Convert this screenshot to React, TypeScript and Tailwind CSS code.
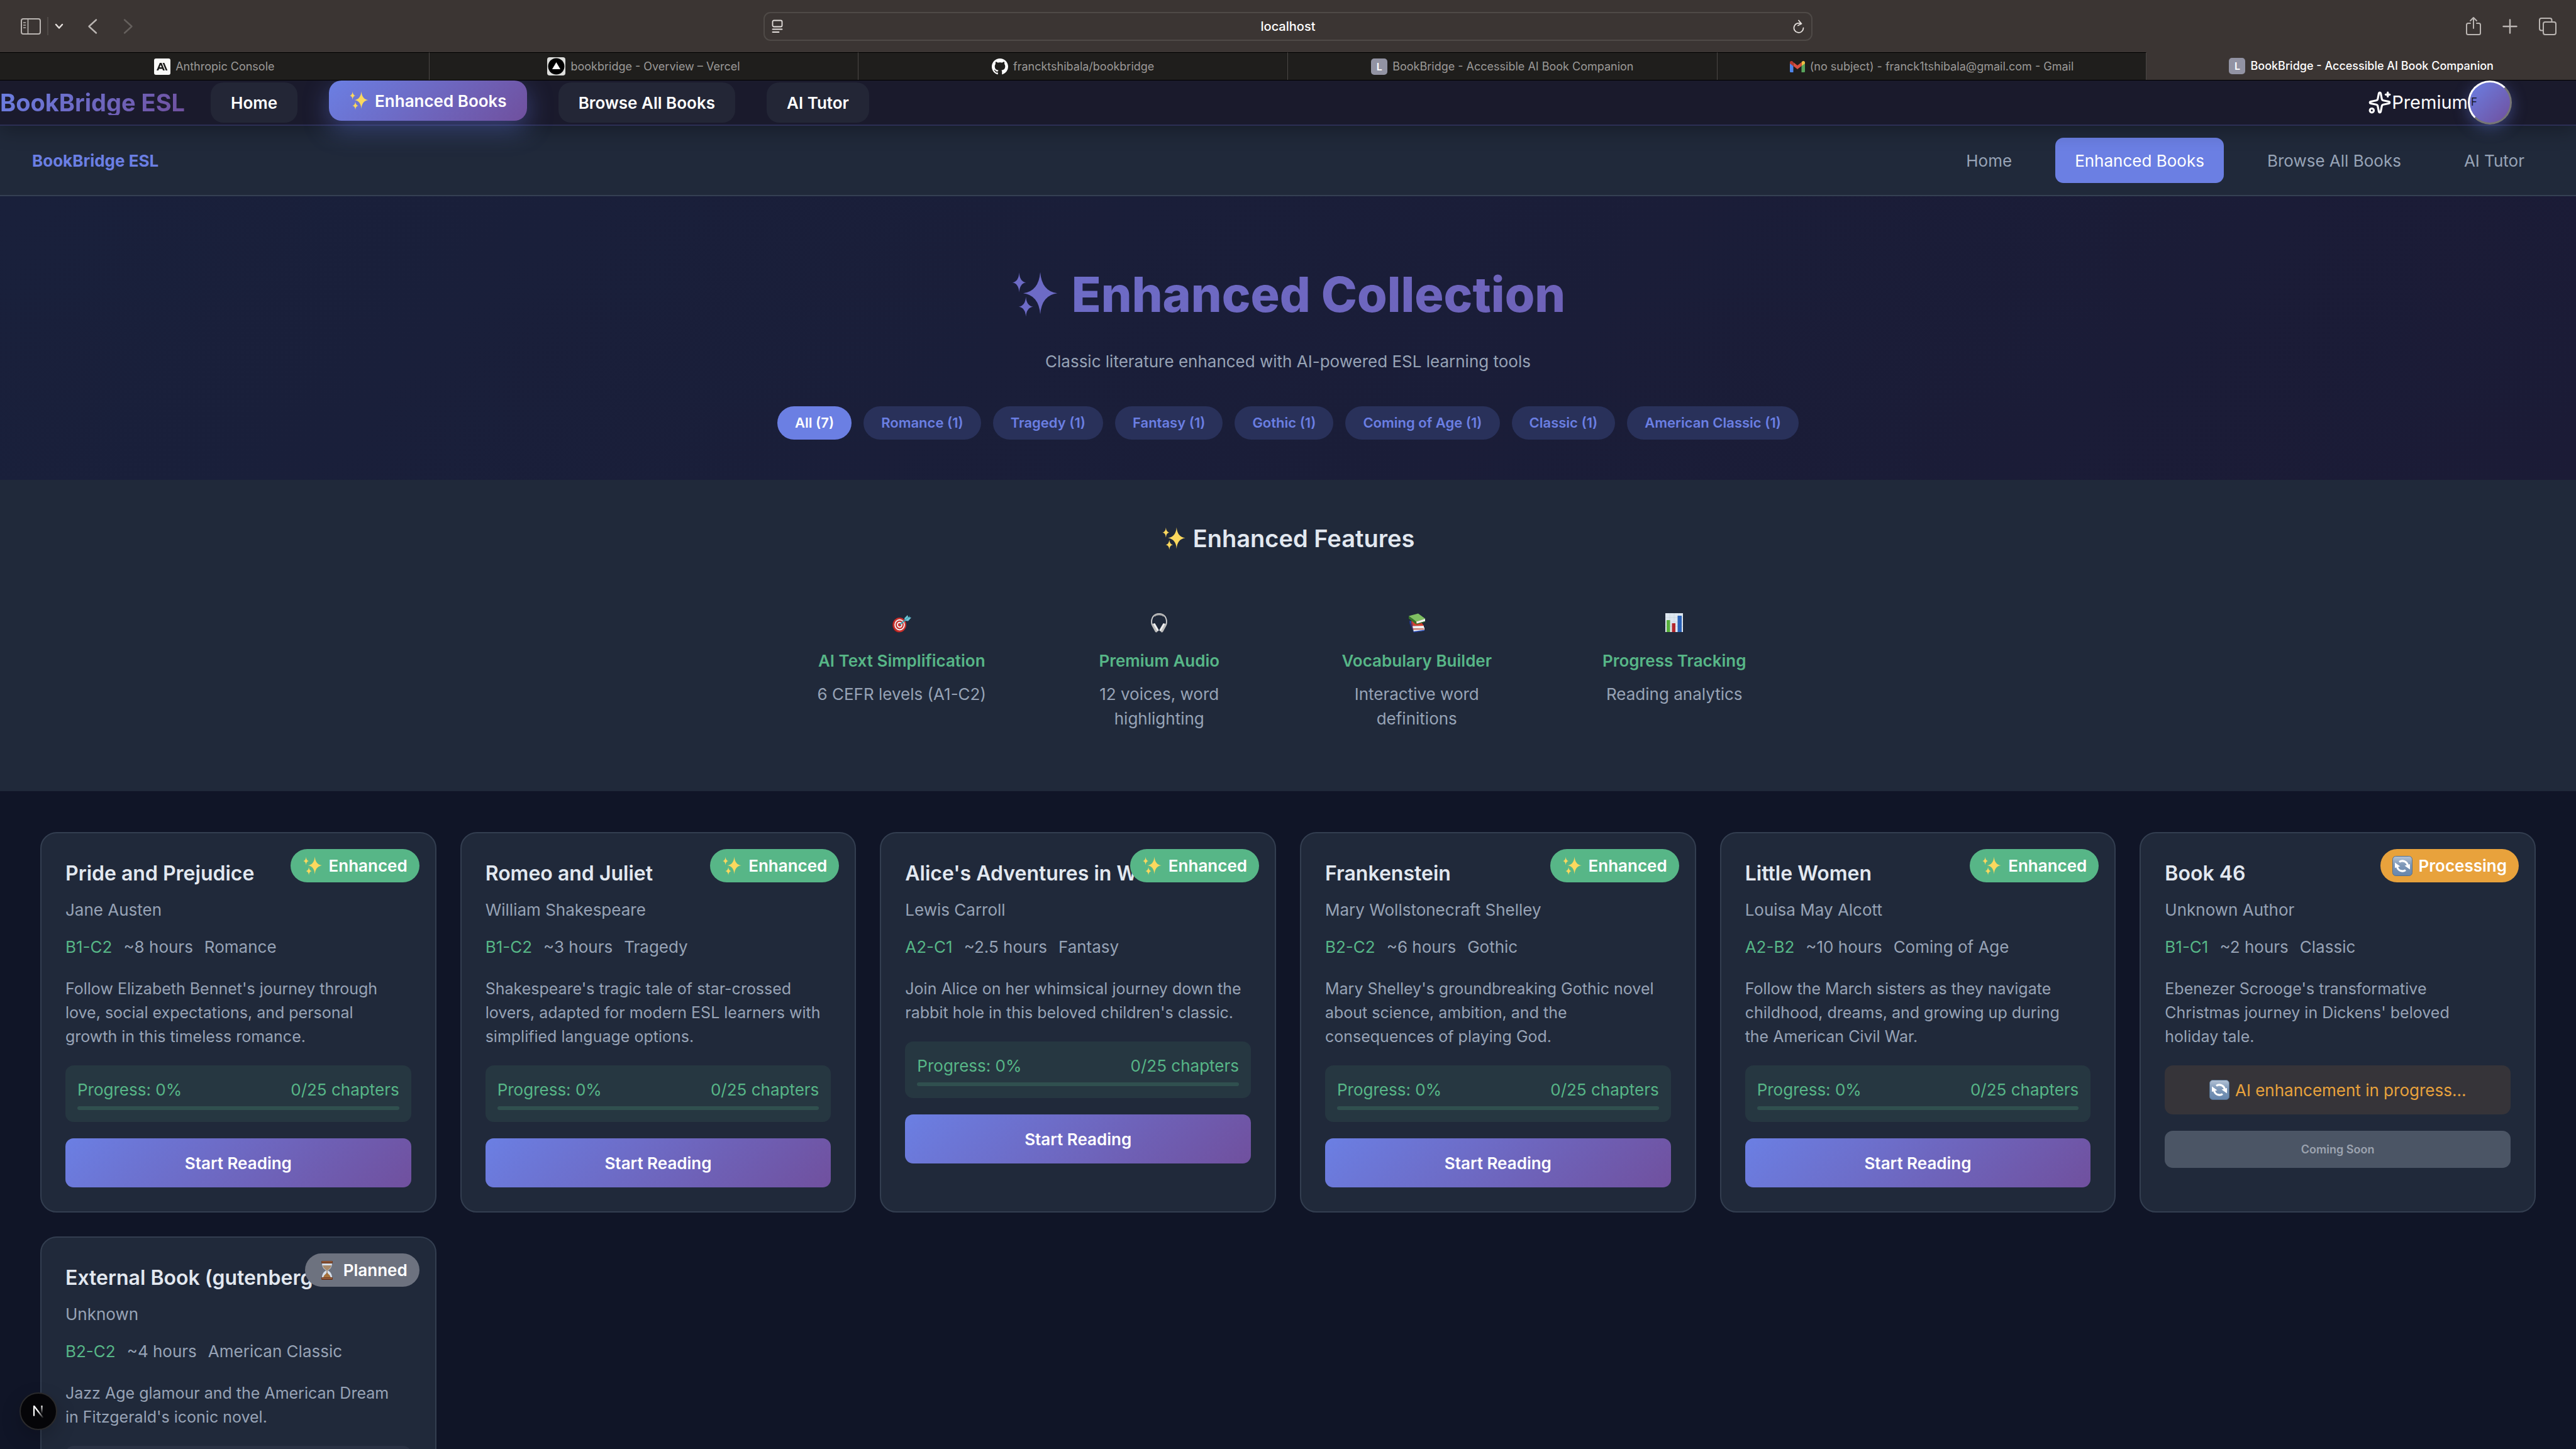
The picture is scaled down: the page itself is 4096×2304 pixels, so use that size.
import React from "react";
import { Sparkles } from "lucide-react";

/* ---------- Emoji-style drawings ---------- */

function star(cx: number, cy: number, rx: number, ry: number) {
  const k = 0.09;
  return `M${cx} ${cy - ry}Q${cx + rx * k} ${cy - ry * k} ${cx + rx} ${cy}Q${cx + rx * k} ${cy + ry * k} ${cx} ${cy + ry}Q${cx - rx * k} ${cy + ry * k} ${cx - rx} ${cy}Q${cx - rx * k} ${cy - ry * k} ${cx} ${cy - ry}Z`;
}

function SparkleEmoji({ className, fill = "#fbd85e" }: { className: string; fill?: string }) {
  return (
    <svg viewBox="-4 -4 108 108" className={className} fill={fill} aria-hidden="true">
      <path d={star(15, 23, 15, 22)} />
      <path d={star(62, 47, 38, 47)} />
      <path d={star(30, 77, 16, 22)} />
    </svg>
  );
}

function RefreshEmoji({ className }: { className: string }) {
  return (
    <svg viewBox="0 0 32 32" className={className} aria-hidden="true">
      <defs>
        <linearGradient id="refresh-tile" x1="0" y1="0" x2="0" y2="1">
          <stop offset="0" stopColor="#b4c3d6" />
          <stop offset="0.45" stopColor="#7d97b7" />
          <stop offset="1" stopColor="#6686ad" />
        </linearGradient>
      </defs>
      <rect x="0.5" y="0.5" width="31" height="31" rx="5" fill="url(#refresh-tile)" stroke="#54708f" />
      <g fill="none" stroke="#fff" strokeWidth="3.2">
        <path d="M11 9.500a8.500 8.500 0 0 1 13.300 5" />
        <path d="M21 22.500a8.500 8.500 0 0 1-13.300-5" />
      </g>
      <path d="M4 10.500v8.500l8.500-2.500zM28 21.500V13l-8.500 2.500z" fill="#fff" />
    </svg>
  );
}

function HourglassEmoji({ className }: { className: string }) {
  return (
    <svg viewBox="0 0 32 32" className={className} aria-hidden="true">
      <path d="M8 4h16c0 7-3 10-7 12 4 2 7 5 7 12H8c0-7 3-10 7-12-4-2-7-5-7-12z" fill="#d5dfeb" />
      <path d="M9 8h14c-1 4-3 6-7 8-4-2-6-4-7-8z" fill="#a88a6b" />
      <path d="M16 19c1 3 5 3 6 9H10c1-6 5-6 6-9z" fill="#a5713c" />
      <path d="M15.500 15h1v7h-1z" fill="#8a6238" />
      <rect x="7" y="1" width="18" height="4" rx="1" fill="#6b3a22" />
      <rect x="7" y="27" width="18" height="4" rx="1" fill="#6b3a22" />
      <rect x="8" y="2" width="16" height="1" fill="#b0724a" />
      <rect x="8" y="28" width="16" height="1" fill="#b0724a" />
    </svg>
  );
}

function TargetEmoji() {
  return (
    <svg viewBox="0 0 32 32" className="size-8" aria-hidden="true">
      <ellipse cx="11.500" cy="20" rx="10.500" ry="11.500" fill="#8f1d1b" />
      <ellipse cx="12.500" cy="19.500" rx="10.500" ry="11.500" fill="#c9302c" />
      <ellipse cx="12.500" cy="19.500" rx="8.300" ry="9" fill="#f3f3f3" />
      <ellipse cx="12.500" cy="19.500" rx="6.500" ry="7" fill="#c9302c" />
      <ellipse cx="12.500" cy="19.500" rx="4.400" ry="4.800" fill="#f3f3f3" />
      <ellipse cx="12.500" cy="19.500" rx="2.500" ry="2.700" fill="#c9302c" />
      <path d="M13 19 23 10.500" stroke="#3c9fb0" strokeWidth="2.200" />
      <path d="M20 9 25 4l1 3 5 1-5 5.500-5-.500z" fill="#6cc4d4" />
      <path d="m20 13 9-7.500" stroke="#2d8796" strokeWidth="1" />
    </svg>
  );
}

function HeadphonesEmoji() {
  return (
    <svg viewBox="0 0 32 32" className="size-8" aria-hidden="true">
      <path d="M4.500 19C2.500 8 8 2 16 2s13.500 6 11.500 17" fill="none" stroke="#cfcfcf" strokeWidth="1.800" />
      <path d="M8 5.500C12 2 20 2 24 5.500" fill="none" stroke="#b0b0b0" strokeWidth="2.800" />
      <g strokeLinecap="round">
        <path d="M6 19.500 11.500 29.500" stroke="#bdbdbd" strokeWidth="4" />
        <path d="M8.500 18.500 14 28" stroke="#f0f0f0" strokeWidth="3" />
        <path d="M26 19.500 20.500 29.500" stroke="#bdbdbd" strokeWidth="4" />
        <path d="M23.500 18.500 18 28" stroke="#f0f0f0" strokeWidth="3" />
      </g>
    </svg>
  );
}

function BooksEmoji() {
  return (
    <svg viewBox="0 0 32 32" className="size-8" aria-hidden="true">
      <path d="M4 13 21 18l7 6-18 3z" fill="#2c4bb5" />
      <path d="M4 13v4l6 13v-4z" fill="#1e3480" />
      <path d="m10 26.500 18-3v5l-17 2.500z" fill="#e9e9ee" />
      <path d="m10 30 18-2.500v1.500L11 31.500z" fill="#2c4bb5" />
      <path d="m7 12 15 2 5 7-17 .500z" fill="#d2402f" />
      <path d="M7 12v6l2 8v-5z" fill="#97261c" />
      <path d="m9 21.500 18-.500v4.500l-17 .500z" fill="#f2f0ee" />
      <path d="M9 25.500h18v1.300H9z" fill="#b5301f" />
      <path d="M3 5.500 18 1.500 29.500 10 15 14.500z" fill="#7fbf62" />
      <path d="M3 5.500v4L15 19v-4.500z" fill="#37752a" />
      <path d="M15 14.500 29 10v4l-13 4z" fill="#f4f4f0" />
      <path d="m15 17.800 14-4v1.200L15.500 19z" fill="#2f6b24" />
    </svg>
  );
}

function ChartEmoji() {
  return (
    <svg viewBox="0 0 32 32" className="size-8" aria-hidden="true">
      <path d="M2 1h28v30H2z" fill="#dfe8f0" />
      <path d="M2 8h28M2 15h28M2 22h28M9 1v30M16 1v30M23 1v30" stroke="#c3d2df" strokeWidth="0.600" />
      <path d="M4 12h5.500v19H4z" fill="#58b03c" />
      <path d="M12.500 17h5.500v14h-5.500z" fill="#b3282d" />
      <path d="M21.500 5H28v26h-6.500z" fill="#2a62b8" />
    </svg>
  );
}

/* ---------- Browser chrome ---------- */

const line = { fill: "none", stroke: "currentColor", strokeLinecap: "round", strokeLinejoin: "round" } as const;

function LetterFavicon() {
  return (
    <span className="flex size-[26px] items-center justify-center rounded-[5px] bg-[#9293a3] text-[16px] font-semibold leading-none text-white">
      L
    </span>
  );
}

function AnthropicFavicon() {
  return (
    <svg viewBox="0 0 26 26" className="size-[26px]" aria-hidden="true">
      <rect width="26" height="26" rx="3" fill="#fafaf8" />
      <path
        fillRule="evenodd"
        d="M4 19 9 7h3l5 12h-2.800l-1.100-2.600H7.900L6.800 19zM8.800 14.100h3.400l-1.700-4.200zM13.600 7h2.700l5 12h-2.700z"
        fill="#1b1b1a"
      />
    </svg>
  );
}

function VercelFavicon() {
  return (
    <svg viewBox="0 0 29 29" className="size-[29px]" aria-hidden="true">
      <rect width="29" height="29" rx="4" fill="#dcdddb" />
      <circle cx="14.500" cy="14.500" r="13" fill="#000" />
      <path d="m14.500 8 6.500 11H8z" fill="#fff" />
    </svg>
  );
}

function GithubFavicon() {
  return (
    <svg viewBox="0 0 16 16" className="size-[26px]" fill="#fff" aria-hidden="true">
      <path d="M8 0C3.580 0 0 3.580 0 8c0 3.540 2.290 6.530 5.470 7.590.4.070.55-.17.55-.38 0-.19-.01-.82-.01-1.490-2.010.37-2.530-.49-2.690-.94-.09-.23-.48-.94-.82-1.130-.28-.15-.68-.52-.01-.53.63-.01 1.080.58 1.230.82.72 1.210 1.870.87 2.330.66.07-.52.28-.87.51-1.070-1.780-.2-3.640-.89-3.640-3.950 0-.87.31-1.590.82-2.150-.08-.2-.36-1.020.08-2.120 0 0 .67-.21 2.200.82.64-.18 1.320-.27 2-.27s1.360.09 2 .27c1.530-1.040 2.200-.82 2.200-.82.44 1.100.16 1.920.08 2.120.51.56.82 1.270.82 2.150 0 3.070-1.870 3.750-3.650 3.950.29.25.54.73.54 1.480 0 1.070-.01 1.930-.01 2.200 0 .21.15.46.55.38A8.010 8.010 0 0 0 16 8c0-4.420-3.580-8-8-8z" />
    </svg>
  );
}

function GmailFavicon() {
  return (
    <svg viewBox="0 0 24 18" className="h-[18px] w-6" aria-hidden="true">
      <path d="M0 2v14.500A1.500 1.500 0 0 0 1.500 18H5.500V8z" fill="#4f86ec" />
      <path d="M24 2v14.500a1.500 1.500 0 0 1-1.500 1.500h-4V8z" fill="#58a55c" />
      <path d="M18.500 2v6L24 4V2.500C24 0 21-.8 19.500.800z" fill="#f2be42" />
      <path d="M5.500 8V2L12 7l6.500-5v6L12 13z" fill="#d95040" />
      <path d="M0 2.500V4l5.500 4V2L4.500.800C3-.8 0 0 0 2.500z" fill="#b53a2f" />
    </svg>
  );
}

const tabs = [
  { title: "Anthropic Console", icon: <AnthropicFavicon /> },
  { title: "bookbridge - Overview – Vercel", icon: <VercelFavicon /> },
  { title: "francktshibala/bookbridge", icon: <GithubFavicon /> },
  { title: "BookBridge - Accessible AI Book Companion", icon: <LetterFavicon /> },
  { title: "(no subject) - franck1tshibala@gmail.com - Gmail", icon: <GmailFavicon /> },
  { title: "BookBridge - Accessible AI Book Companion", icon: <LetterFavicon />, active: true },
];

function BrowserChrome() {
  return (
    <div className="relative z-20 shrink-0">
      <div className="grid h-[83px] grid-cols-[1fr_40.7%_1fr] items-center bg-[#3b3533] text-[#bab5b2]">
        <div className="flex items-center pl-[33px]">
          <button type="button" aria-label="Show sidebar">
            <svg viewBox="0 0 32 26" className="h-[26px] w-8" {...line} strokeWidth="2">
              <rect x="1" y="1" width="30" height="24" rx="3" />
              <path d="M11.500 1v24M4.500 7h3M4.500 11h3M4.500 15h3" strokeWidth="1.600" />
            </svg>
          </button>
          <span className="ml-[10px] h-[29px] w-[2px] bg-[#4f4a47]" />
          <button type="button" aria-label="Tab groups" className="ml-[10px] text-[#e4dfdc]">
            <svg viewBox="0 0 14 10" className="h-[10px] w-[14px]" {...line} strokeWidth="2.500">
              <path d="m2 2 5 5.500L12 2" />
            </svg>
          </button>
          <button type="button" aria-label="Back" className="ml-[38px]">
            <svg viewBox="0 0 16 26" className="h-[26px] w-4" {...line} strokeWidth="2.400">
              <path d="M14 2.500 2.500 13 14 23.500" />
            </svg>
          </button>
          <button type="button" aria-label="Forward" className="ml-[41px] text-[#65605d]">
            <svg viewBox="0 0 16 26" className="h-[26px] w-4" {...line} strokeWidth="2.400">
              <path d="M2 2.500 13.500 13 2 23.500" />
            </svg>
          </button>
        </div>
        <div className="flex h-[46px] items-center rounded-[11px] border-2 border-[#4f4a47] px-[11px] text-[#e4dfdc]">
          <svg viewBox="0 0 18 22" className="h-[22px] w-[18px]" {...line} strokeWidth="1.800" aria-hidden="true">
            <rect x="1.500" y="1.500" width="15" height="10" rx="2" />
            <path d="M1.500 15.500h15M1.500 20h10" />
          </svg>
          <input
            aria-label="Address"
            defaultValue="localhost"
            className="min-w-0 flex-1 bg-transparent text-center text-[20px] font-medium leading-[28px] text-white outline-none"
          />
          <button type="button" aria-label="Reload">
            <svg viewBox="0 0 18 22" className="h-[22px] w-[18px]" {...line} strokeWidth="1.800">
              <path d="M13 7a7.500 7.500 0 1 0 3.500 6.300M9 1.500l4.500 5.300L8 9.500" />
            </svg>
          </button>
        </div>
        <div className="flex items-center justify-end pr-[30px]">
          <button type="button" aria-label="Share">
            <svg viewBox="0 0 26 32" className="h-8 w-[26px]" {...line} strokeWidth="2">
              <path d="M8 11H4.500A2.500 2.500 0 0 0 2 13.500v13A2.500 2.500 0 0 0 4.500 29h17a2.500 2.500 0 0 0 2.500-2.500v-13a2.500 2.500 0 0 0-2.500-2.500H18M13 19V2.500M8 7l5-5 5 5" />
            </svg>
          </button>
          <button type="button" aria-label="New tab" className="ml-[33px]">
            <svg viewBox="0 0 24 24" className="size-6" {...line} strokeWidth="2.400">
              <path d="M12 1.500v21M1.500 12h21" />
            </svg>
          </button>
          <button type="button" aria-label="Show all tabs" className="ml-[33px]">
            <svg viewBox="0 0 30 30" className="size-[30px]" {...line} strokeWidth="2">
              <rect x="8" y="8" width="20" height="20" rx="3" />
              <path d="M8 21.500H5A3 3 0 0 1 2 18.500V5a3 3 0 0 1 3-3h13.500a3 3 0 0 1 3 3v3" />
            </svg>
          </button>
        </div>
      </div>
      <div className="grid h-[45px] grid-cols-6 border-b border-black text-[18px] leading-[24px]">
        {tabs.map((tab, i) => (
          <button
            key={i}
            type="button"
            className={
              tab.active
                ? "flex items-center justify-center gap-2 bg-[#3b3533] font-medium text-white"
                : "flex items-center justify-center gap-2 border-t border-r border-t-black border-r-[#4a4745] bg-[#1f1e1c] text-[#9b9997]"
            }
          >
            {tab.icon}
            <span>{tab.title}</span>
          </button>
        ))}
      </div>
    </div>
  );
}

/* ---------- Site header ---------- */

const pill = "flex h-16 items-center rounded-[20px] px-8 text-[26px] font-semibold text-white";

function TopHeader() {
  return (
    <header className="relative z-10 flex h-[72px] shrink-0 items-center border-b-2 border-[#2c2f54] bg-[#1a1a2c] shadow-[0_6px_32px_rgba(0,0,0,0.3)]">
      <a
        href="#"
        className="bg-[linear-gradient(135deg,#6b7fe3,#70509e)] bg-clip-text text-[38px] font-bold leading-[40px] text-transparent"
      >
        BookBridge ESL
      </a>
      <nav className="ml-[41px] flex gap-[50px]">
        <a href="#" className={`${pill} bg-[#232636]`}>
          Home
        </a>
        <a
          href="#"
          aria-current="page"
          className={`${pill} -translate-y-[3px] gap-[9px] bg-[linear-gradient(135deg,#6b7fe3,#70509e)] shadow-[0_13px_40px_rgba(102,126,234,0.4)]`}
        >
          <SparkleEmoji className="size-8" />
          Enhanced Books
        </a>
        <a href="#" className={`${pill} bg-[#232636]`}>
          Browse All Books
        </a>
        <a href="#" className={`${pill} bg-[#232636]`}>
          AI Tutor
        </a>
      </nav>
      <div className="ml-auto flex items-center pr-[102px] text-white">
        <Sparkles size={38} strokeWidth={2} />
        <span className="text-[29px]">Premium</span>
        <button
          type="button"
          aria-label="Account menu"
          className="size-[70px] rounded-full border-[3px] border-t-white border-r-[#767676] border-b-[#767676] border-l-white bg-[linear-gradient(135deg,#6b7fe3,#70509e)] pl-[2px] text-left text-[17px] text-[#1a1a2c] shadow-[0_6px_24px_rgba(102,126,234,0.4)]"
        >
          F
        </button>
      </div>
    </header>
  );
}

const navLink = "flex h-[72px] items-center rounded-[13px] px-[31px]";

function SubNav() {
  return (
    <nav className="flex h-[112px] items-center justify-between border-b-2 border-[#354053] bg-[#20293a] px-[51px] text-[26px] text-[#97a3b6]">
      <a href="#" className="font-bold text-[#6b7fe3]">
        BookBridge ESL
      </a>
      <div className="flex gap-[38px]">
        <a href="#" className={navLink}>
          Home
        </a>
        <a href="#" aria-current="page" className={`${navLink} bg-[#6b7fe3] text-white`}>
          Enhanced Books
        </a>
        <a href="#" className={navLink}>
          Browse All Books
        </a>
        <a href="#" className={navLink}>
          AI Tutor
        </a>
      </div>
    </nav>
  );
}

/* ---------- Hero and features ---------- */

const genres = [
  "All (7)",
  "Romance (1)",
  "Tragedy (1)",
  "Fantasy (1)",
  "Gothic (1)",
  "Coming of Age (1)",
  "Classic (1)",
  "American Classic (1)",
];

function Hero() {
  return (
    <section className="bg-[linear-gradient(135deg,#19203b,#1b1b36)] pt-[94px] pb-16">
      <h1 className="flex items-center justify-center gap-5 bg-[linear-gradient(135deg,#6b7fe3,#70509e)] bg-clip-text text-[77px] font-extrabold leading-[124px] text-transparent">
        <SparkleEmoji className="size-[77px]" fill="#6d6bc6" />
        Enhanced Collection
      </h1>
      <p className="mt-6 text-center text-[26px] leading-[42px] text-[#97a3b6]">
        Classic literature enhanced with AI-powered ESL learning tools
      </p>
      <div className="mt-[50px] flex justify-center gap-[19px]">
        {genres.map((genre, i) => (
          <button
            key={genre}
            type="button"
            className={
              i === 0
                ? "h-[53px] rounded-full bg-[#6b7fe3] px-7 text-[22px] font-semibold text-white"
                : "h-[53px] rounded-full bg-[#29315a] px-7 text-[22px] font-semibold text-[#6b7fe3]"
            }
          >
            {genre}
          </button>
        ))}
      </div>
    </section>
  );
}

const features = [
  { icon: <TargetEmoji />, title: "AI Text Simplification", text: "6 CEFR levels (A1-C2)" },
  { icon: <HeadphonesEmoji />, title: "Premium Audio", text: "12 voices, word highlighting" },
  { icon: <BooksEmoji />, title: "Vocabulary Builder", text: "Interactive word definitions" },
  { icon: <ChartEmoji />, title: "Progress Tracking", text: "Reading analytics" },
];

function Features() {
  return (
    <section className="bg-[#20293a] pt-[67px] pb-24">
      <h2 className="flex items-center justify-center gap-[11px] text-[38px] font-semibold leading-[52px] text-[#e2e8f0]">
        <SparkleEmoji className="size-[39px]" />
        Enhanced Features
      </h2>
      <div className="mx-auto mt-[92px] grid max-w-[1587px] grid-cols-4 gap-[51px]">
        {features.map((feature) => (
          <div key={feature.title} className="flex flex-col items-center px-[26px] text-center text-[26px]">
            {feature.icon}
            <h3 className="mt-6 leading-[42px] font-semibold whitespace-nowrap text-[#57b687]">{feature.title}</h3>
            <p className="mt-3 leading-[39px] text-[#97a3b6]">{feature.text}</p>
          </div>
        ))}
      </div>
    </section>
  );
}

/* ---------- Books ---------- */

type Status = "enhanced" | "processing" | "planned";

interface Book {
  title: string;
  author: string;
  level: string;
  hours: string;
  genre: string;
  text: string;
  status: Status;
}

const books: Book[] = [
  {
    title: "Pride and Prejudice",
    author: "Jane Austen",
    level: "B1-C2",
    hours: "~8 hours",
    genre: "Romance",
    text: "Follow Elizabeth Bennet's journey through love, social expectations, and personal growth in this timeless romance.",
    status: "enhanced",
  },
  {
    title: "Romeo and Juliet",
    author: "William Shakespeare",
    level: "B1-C2",
    hours: "~3 hours",
    genre: "Tragedy",
    text: "Shakespeare's tragic tale of star-crossed lovers, adapted for modern ESL learners with simplified language options.",
    status: "enhanced",
  },
  {
    title: "Alice's Adventures in Wonderland",
    author: "Lewis Carroll",
    level: "A2-C1",
    hours: "~2.5 hours",
    genre: "Fantasy",
    text: "Join Alice on her whimsical journey down the rabbit hole in this beloved children's classic.",
    status: "enhanced",
  },
  {
    title: "Frankenstein",
    author: "Mary Wollstonecraft Shelley",
    level: "B2-C2",
    hours: "~6 hours",
    genre: "Gothic",
    text: "Mary Shelley's groundbreaking Gothic novel about science, ambition, and the consequences of playing God.",
    status: "enhanced",
  },
  {
    title: "Little Women",
    author: "Louisa May Alcott",
    level: "A2-B2",
    hours: "~10 hours",
    genre: "Coming of Age",
    text: "Follow the March sisters as they navigate childhood, dreams, and growing up during the American Civil War.",
    status: "enhanced",
  },
  {
    title: "Book 46",
    author: "Unknown Author",
    level: "B1-C1",
    hours: "~2 hours",
    genre: "Classic",
    text: "Ebenezer Scrooge's transformative Christmas journey in Dickens' beloved holiday tale.",
    status: "processing",
  },
  {
    title: "External Book (gutenberg…",
    author: "Unknown",
    level: "B2-C2",
    hours: "~4 hours",
    genre: "American Classic",
    text: "Jazz Age glamour and the American Dream in Fitzgerald's iconic novel.",
    status: "planned",
  },
];

const badgeBase =
  "absolute top-[25px] right-[25px] flex h-[53px] items-center gap-[10px] rounded-full px-[19px] text-[26px] font-semibold text-white";

function Badge({ status }: { status: Status }) {
  if (status === "processing")
    return (
      <span className={`${badgeBase} bg-[#e8a23c]`}>
        <RefreshEmoji className="size-8" />
        Processing
      </span>
    );
  if (status === "planned")
    return (
      <span className={`${badgeBase} bg-[#6d727f]`}>
        <HourglassEmoji className="size-8" />
        Planned
      </span>
    );
  return (
    <span className={`${badgeBase} bg-[#57b687]`}>
      <SparkleEmoji className="size-8" />
      Enhanced
    </span>
  );
}

function BookCard({ book }: { book: Book }) {
  return (
    <article className="relative rounded-[26px] border-2 border-[#333e50] bg-[#20293a] p-[38px] text-[26px] leading-[41px] text-[#97a3b6]">
      <Badge status={book.status} />
      <h3 className="truncate text-[32px] font-semibold leading-[51px] text-[#e2e8f0]">{book.title}</h3>
      <p className="mt-3">{book.author}</p>
      <div className="mt-[18px] flex gap-[18px]">
        <span className="text-[#57b687]">{book.level}</span>
        <span>{book.hours}</span>
        <span>{book.genre}</span>
      </div>
      <p className="mt-[27px] pr-3 text-[25px] leading-[38px]">{book.text}</p>
      {book.status === "enhanced" && (
        <>
          <div className="mt-[27px] rounded-[13px] bg-[#263741] p-[19px] leading-[40px] text-[#57b687]">
            <div className="flex justify-between">
              <span>Progress: 0%</span>
              <span>0/25 chapters</span>
            </div>
            <div
              role="progressbar"
              aria-label="Reading progress"
              aria-valuenow={0}
              className="mt-[6px] h-[6px] rounded-[3px] bg-[#30504f]"
            />
          </div>
          <button
            type="button"
            className="mt-[26px] block h-[78px] w-full rounded-[13px] bg-[linear-gradient(135deg,#6b7fe3,#70509e)] font-semibold text-white"
          >
            Start Reading
          </button>
        </>
      )}
      {book.status === "processing" && (
        <>
          <div className="mt-[27px] flex h-[78px] items-center justify-center gap-[9px] rounded-[13px] bg-[#363439] text-[#e8a23c]">
            <RefreshEmoji className="size-8" />
            AI enhancement in progress...
          </div>
          <button
            type="button"
            disabled
            className="mt-[26px] block h-[59px] w-full rounded-[13px] bg-[#4b5565] text-[18px] font-semibold text-[#9ca3af]"
          >
            Coming Soon
          </button>
        </>
      )}
      {book.status === "planned" && <div className="mt-[27px] h-[78px] rounded-[13px] bg-[#2a3244]" />}
    </article>
  );
}

function NextBadge() {
  return (
    <button
      type="button"
      aria-label="Open developer tools"
      className="absolute bottom-[30px] left-[31px] z-10 flex size-[60px] items-center justify-center rounded-full border-2 border-[#2a2a2c] bg-[#050508] shadow-[0_12px_32px_rgba(0,0,0,0.2)]"
    >
      <svg viewBox="0 0 20 22" className="h-[22px] w-5" fill="none" aria-hidden="true">
        <defs>
          <linearGradient id="n-diagonal" x1="10" y1="10" x2="18" y2="22" gradientUnits="userSpaceOnUse">
            <stop stopColor="#fff" />
            <stop offset="1" stopColor="#fff" stopOpacity="0" />
          </linearGradient>
          <linearGradient id="n-stem" x1="16" y1="2" x2="16" y2="15" gradientUnits="userSpaceOnUse">
            <stop stopColor="#fff" />
            <stop offset="1" stopColor="#fff" stopOpacity="0" />
          </linearGradient>
        </defs>
        <path d="M3 2.500 17.500 21.500" stroke="url(#n-diagonal)" strokeWidth="2.200" />
        <path d="M3 18.500V2" stroke="#fff" strokeWidth="2.200" />
        <path d="M15.500 2v13" stroke="url(#n-stem)" strokeWidth="2.200" />
      </svg>
    </button>
  );
}

export default function App() {
  return (
    <div className="relative flex h-screen flex-col overflow-hidden bg-[#101527] font-['Inter',sans-serif]">
      <BrowserChrome />
      <TopHeader />
      <main className="min-h-0 flex-1 overflow-hidden">
        <SubNav />
        <Hero />
        <Features />
        <section className="grid grid-cols-[repeat(auto-fill,minmax(560px,1fr))] gap-[38px] px-16 py-[65px]">
          {books.map((book) => (
            <BookCard key={book.title} book={book} />
          ))}
        </section>
      </main>
      <NextBadge />
    </div>
  );
}
